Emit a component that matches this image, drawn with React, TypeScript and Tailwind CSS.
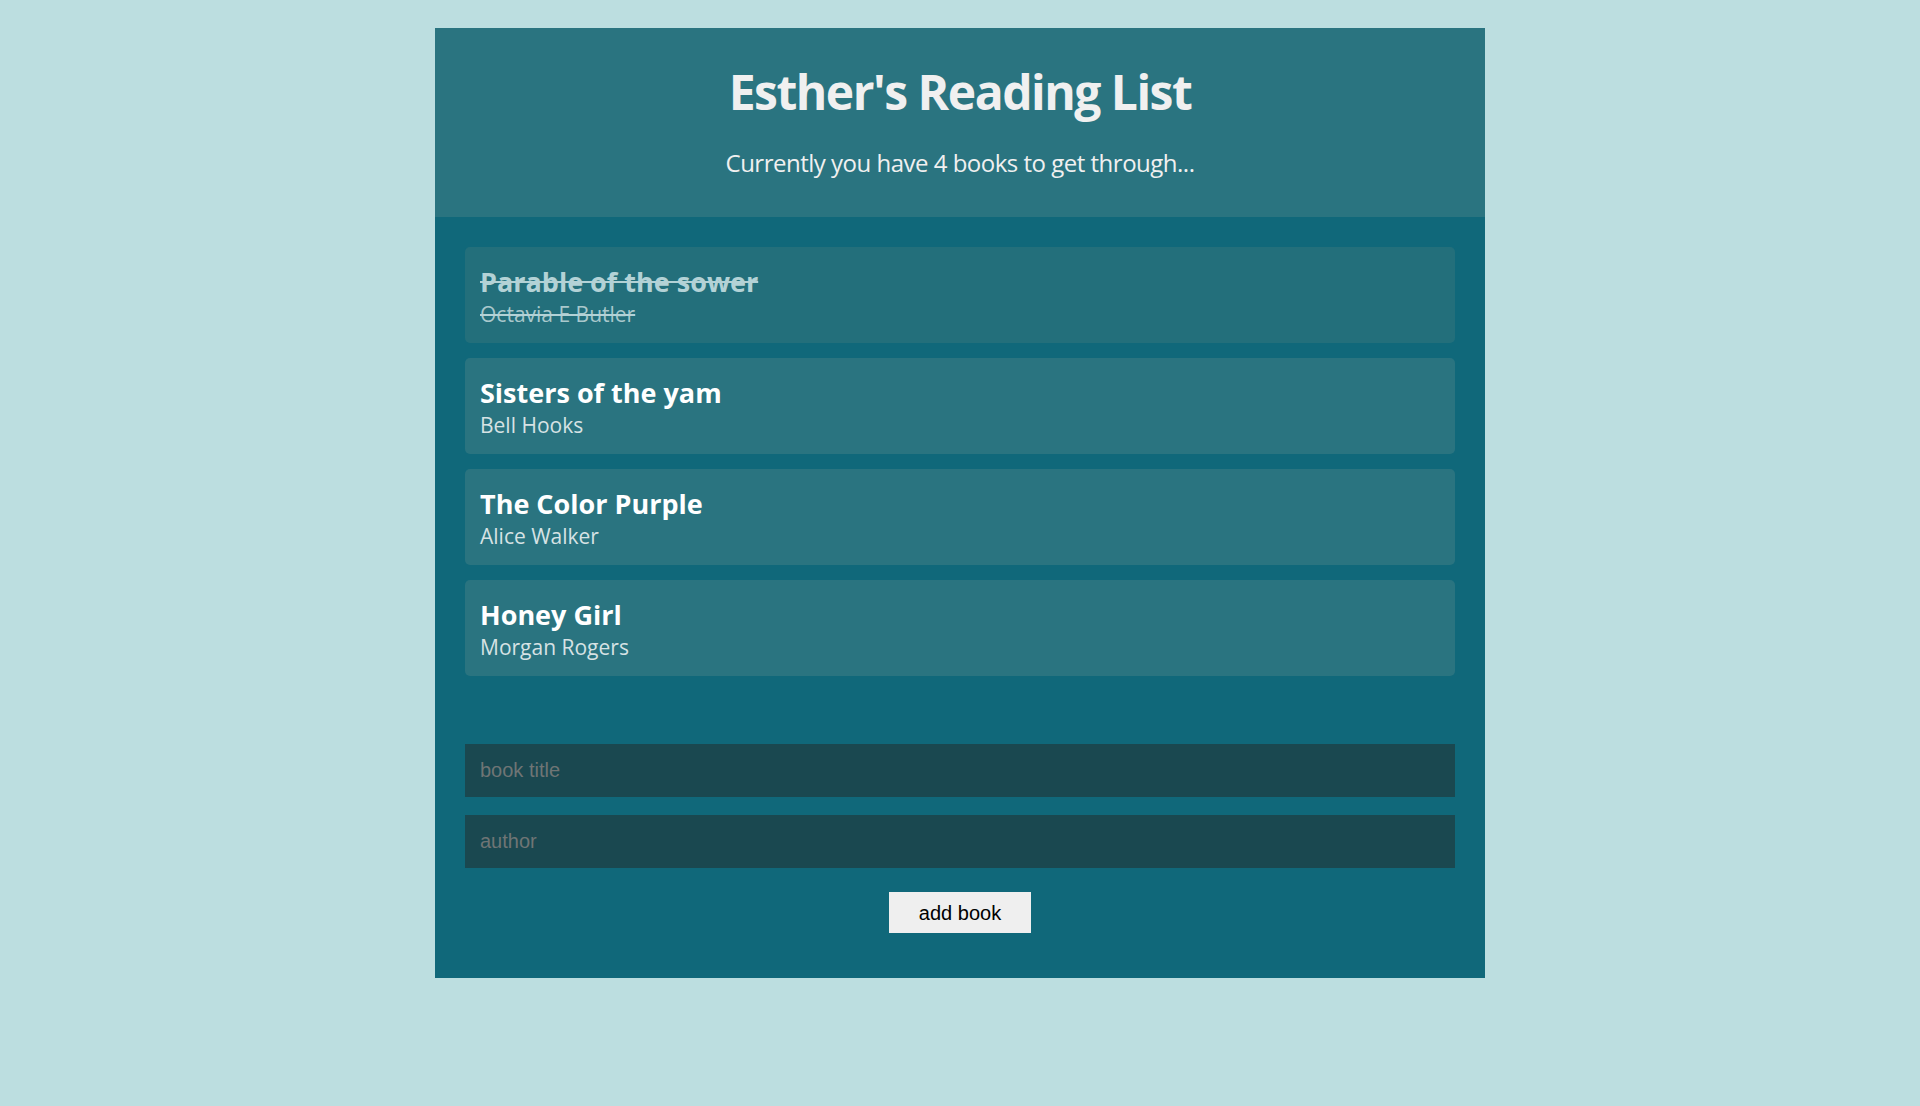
import React, { useState } from "react";

type Book = {
  title: string;
  author: string;
  read: boolean;
};

const startBooks: Book[] = [
  { title: "Parable of the sower", author: "Octavia E Butler", read: true },
  { title: "Sisters of the yam", author: "Bell Hooks", read: false },
  { title: "The Color Purple", author: "Alice Walker", read: false },
  { title: "Honey Girl", author: "Morgan Rogers", read: false },
];

export default function App() {
  const [books, setBooks] = useState<Book[]>(startBooks);
  const [form, setForm] = useState({ title: "", author: "" });

  const addBook = (e: React.FormEvent) => {
    e.preventDefault();
    if (!form.title.trim()) return;
    setBooks([...books, { title: form.title, author: form.author, read: false }]);
    setForm({ title: "", author: "" });
  };

  // click a book to mark it read / unread
  const toggle = (i: number) => {
    setBooks(books.map((b, idx) => (idx === i ? { ...b, read: !b.read } : b)));
  };

  return (
    <div className="min-h-screen bg-[#bcdee0] pt-[28px] font-['Open_Sans',sans-serif]">
      <div className="mx-auto w-[1050px] bg-[#10687a]">
        <header className="h-[189px] bg-[#2a7480] pt-[40px] text-center text-[#f0f0f0]">
          <h1 className="text-[48px] font-bold leading-[48px] tracking-[-1.5px]">
            Esther's Reading List
          </h1>
          <p className="mt-[31px] text-[24px] leading-[32px] tracking-[-0.5px]">
            Currently you have {books.length} books to get through...
          </p>
        </header>

        <div className="px-[30px] pt-[30px] pb-[45px]">
          <ul className="flex flex-col gap-[15px]">
            {books.map((book, i) => (
              <li
                key={book.title + i}
                onClick={() => toggle(i)}
                className={
                  book.read
                    ? "h-[96px] cursor-pointer rounded-[5px] bg-[#236f7b] px-[15px] pt-[20px] text-[#b3d2d6] line-through"
                    : "h-[96px] cursor-pointer rounded-[5px] bg-[#2a7480] px-[15px] pt-[20px] text-white"
                }
              >
                <h2 className="text-[27px] font-bold leading-[30px]">{book.title}</h2>
                <p
                  className={
                    book.read
                      ? "mt-[5px] text-[21px] leading-[24px] text-[#a9c8cc]"
                      : "mt-[5px] text-[21px] leading-[24px] text-[#d6e2e4]"
                  }
                >
                  {book.author}
                </p>
              </li>
            ))}
          </ul>

          <form onSubmit={addBook} className="mt-[68px] flex flex-col">
            <input
              className="h-[53px] w-full bg-[#1a4850] px-[15px] font-['Liberation_Sans',Arial,sans-serif] text-[20px] text-white placeholder:text-[#6f7575] outline-none"
              type="text"
              value={form.title}
              onChange={(e) => setForm({ ...form, title: e.target.value })}
              placeholder="book title"
            />
            <input
              className="mt-[18px] h-[53px] w-full bg-[#1a4850] px-[15px] font-['Liberation_Sans',Arial,sans-serif] text-[20px] text-white placeholder:text-[#6f7575] outline-none"
              type="text"
              value={form.author}
              onChange={(e) => setForm({ ...form, author: e.target.value })}
              placeholder="author"
            />
            <button
              type="submit"
              className="mx-auto mt-[24px] h-[41px] w-[142px] cursor-pointer bg-[#efefef] font-['Liberation_Sans',Arial,sans-serif] text-[20px] text-black"
            >
              add book
            </button>
          </form>
        </div>
      </div>
    </div>
  );
}
